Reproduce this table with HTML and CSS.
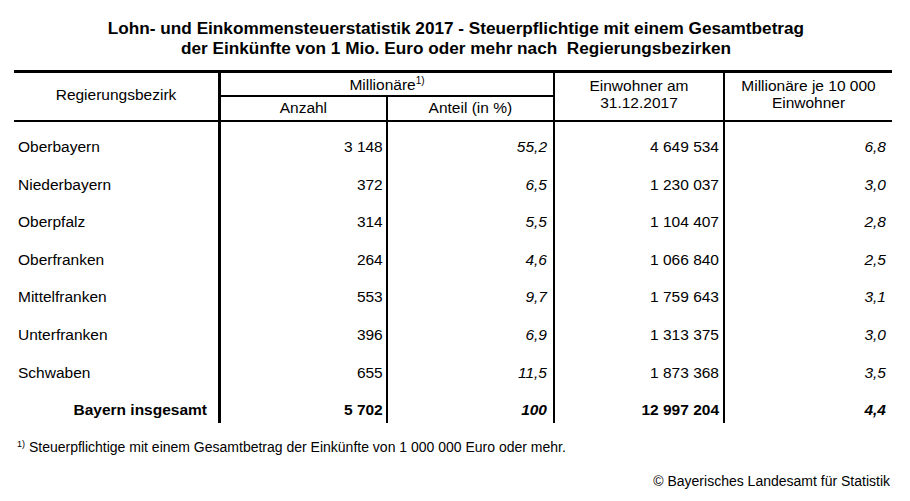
FILE: index.html
```html
<!DOCTYPE html>
<html lang="de">
<head>
<meta charset="utf-8">
<link rel="stylesheet" href="styles.css">
</head>
<body>
<div class="page">
  <h1 class="title">Lohn- und Einkommensteuerstatistik 2017 - Steuerpflichtige mit einem Gesamtbetrag<br>der Einkünfte von 1 Mio. Euro oder mehr nach&nbsp; Regierungsbezirken</h1>
  <table class="stat">
    <thead>
      <tr class="h1row">
        <th rowspan="2" class="c1">Regierungsbezirk</th>
        <th colspan="2" class="grp">Millionäre<sup>1)</sup></th>
        <th rowspan="2" class="c4">Einwohner am<br>31.12.2017</th>
        <th rowspan="2" class="c5">Millionäre je 10 000<br>Einwohner</th>
      </tr>
      <tr class="h2row">
        <th class="c2">Anzahl</th>
        <th class="c3">Anteil (in %)</th>
      </tr>
    </thead>
    <tbody>
      <tr><td class="c1">Oberbayern</td><td class="c2">3 148</td><td class="c3 it">55,2</td><td class="c4">4 649 534</td><td class="c5 it">6,8</td></tr>
      <tr><td class="c1">Niederbayern</td><td class="c2">372</td><td class="c3 it">6,5</td><td class="c4">1 230 037</td><td class="c5 it">3,0</td></tr>
      <tr><td class="c1">Oberpfalz</td><td class="c2">314</td><td class="c3 it">5,5</td><td class="c4">1 104 407</td><td class="c5 it">2,8</td></tr>
      <tr><td class="c1">Oberfranken</td><td class="c2">264</td><td class="c3 it">4,6</td><td class="c4">1 066 840</td><td class="c5 it">2,5</td></tr>
      <tr><td class="c1">Mittelfranken</td><td class="c2">553</td><td class="c3 it">9,7</td><td class="c4">1 759 643</td><td class="c5 it">3,1</td></tr>
      <tr><td class="c1">Unterfranken</td><td class="c2">396</td><td class="c3 it">6,9</td><td class="c4">1 313 375</td><td class="c5 it">3,0</td></tr>
      <tr><td class="c1">Schwaben</td><td class="c2">655</td><td class="c3 it">11,5</td><td class="c4">1 873 368</td><td class="c5 it">3,5</td></tr>
      <tr class="total"><td class="c1">Bayern insgesamt</td><td class="c2">5 702</td><td class="c3 it">100</td><td class="c4">12 997 204</td><td class="c5 it">4,4</td></tr>
    </tbody>
  </table>
  <p class="note"><sup>1)</sup> Steuerpflichtige mit einem Gesamtbetrag der Einkünfte von 1 000 000 Euro oder mehr.</p>
  <p class="copy">© Bayerisches Landesamt für Statistik</p>
</div>
</body>
</html>
```

FILE: styles.css
```css
html, body {
  margin: 0;
  padding: 0;
  background: #fff;
}
body {
  font-family: "Liberation Sans", Arial, sans-serif;
  color: #000;
}
.page {
  width: 910px;
  height: 501px;
  padding-top: 18px;
  box-sizing: border-box;
}
.title {
  margin: 0;
  font-size: 17.2px;
  line-height: 20px;
  font-weight: bold;
  text-align: center;
  padding-left: 2px;
}
.stat {
  margin: 12px 0 0 14px;
  border-collapse: collapse;
  table-layout: fixed;
  width: 878px;
  font-size: 15.5px;
}
.stat th {
  font-weight: normal;
  padding: 0;
  line-height: 17px;
}
.stat thead tr.h1row th {
  border-top: 3px solid #000;
}
.stat thead th {
  border-bottom: 2px solid #000;
}
.h1row th.grp {
  height: 20px;
  vertical-align: bottom;
  padding-bottom: 2px;
}
.h1row th.c1 {
  vertical-align: middle;
  padding-bottom: 4px;
}
.h1row th.c4, .h1row th.c5 {
  vertical-align: middle;
  padding-bottom: 5px;
}
.h2row th {
  height: 21px;
  vertical-align: middle;
  padding-bottom: 2px;
}
sup {
  font-size: 10px;
  vertical-align: 6px;
  line-height: 0;
}
.c1 { width: 204px; }
.c2 { width: 168px; }
.c3 { width: 166px; }
.c4 { width: 168px; }
.c5 { width: 167px; }
.stat th.c1, .stat td.c1 { border-right: 3px solid #000; }
.stat th.grp { border-right: 2px solid #000; }
.stat .c2 { border-right: 2px solid #000; }
.stat .c3 { border-right: 2px solid #000; }
.stat .c4 { border-right: 2px solid #000; }
.stat td {
  padding: 16px 5px 4.6px 0;
  line-height: 17px;
  text-align: right;
  white-space: nowrap;
}
.stat td.c1 {
  text-align: left;
  padding-left: 4px;
}
.stat td.it {
  font-style: italic;
  padding-right: 6px;
}
.stat td.c2 { padding-right: 3px; }
.stat td.c4 { padding-right: 4px; }
.total td {
  font-weight: bold;
}
.total td.c1 {
  text-align: right;
  padding-right: 11px;
}
.note {
  margin: 16px 0 0 17px;
  font-size: 14px;
  line-height: 16px;
}
.note sup {
  font-size: 9px;
  vertical-align: 5px;
}
.copy {
  margin: 18px 20px 0 0;
  font-size: 14px;
  line-height: 16px;
  text-align: right;
}
```
